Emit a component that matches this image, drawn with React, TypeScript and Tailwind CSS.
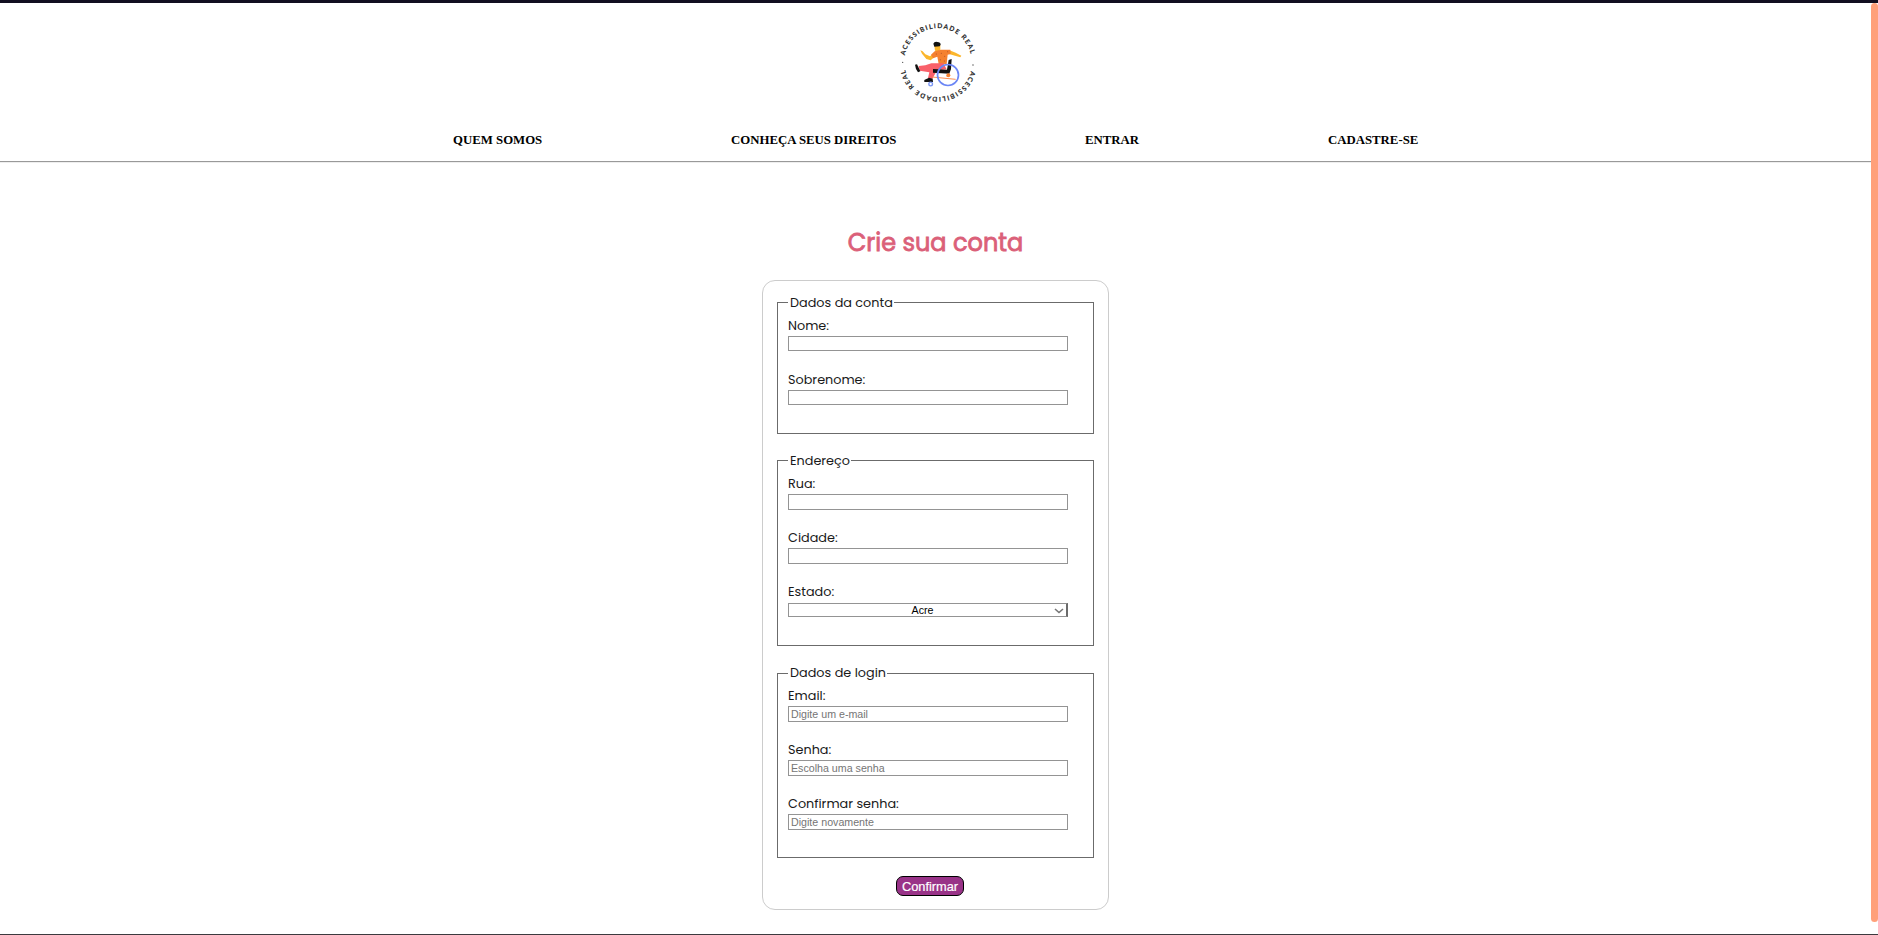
import React from "react";

function Logo() {
  return (
    <svg viewBox="48 60 252 252" className="h-[84px] w-[84px]" role="img">
      <defs>
        <path id="ring-top" d="M 74.6 166.5 A 101 101 0 0 1 274 172.5" />
        <path id="ring-low" d="M 272.8 213 A 101 101 0 0 1 74.8 206.5" />
      </defs>
      <g fill="#262626" stroke="#262626" strokeWidth="0.4" fontSize="19.5" fontWeight="700" fontFamily="Lato, sans-serif">
        <text>
          <textPath href="#ring-top" textLength="274">ACESSIBILIDADE REAL</textPath>
        </text>
        <text>
          <textPath href="#ring-low" textLength="274">ACESSIBILIDADE REAL</textPath>
        </text>
      </g>
      <circle cx="68" cy="187" r="2" fill="#444" />
      <circle cx="279" cy="195" r="2" fill="#444" />
      <path d="M121 151 L128 154 L136 163 L150 169 L163 158 L168 167 L152 181 L139 177 L126 161 Z" fill="#fbb62c" />
      <path d="M207 150 L227 158 L244 167 L241 172 L225 167 L207 162 Z" fill="#fbb62c" />
      <path d="M163 136 L181 136 L181 148 L176 155 L165 152 Z" fill="#fbb62c" />
      <path d="M160 131 Q163 124 172 126 Q182 127 182 134 L179 139 L163 140 Z" fill="#111" />
      <path d="M153 164 L164 154 L183 149 L211 149 L212 162 L203 164 L200 192 L176 192 L172 170 L159 175 Z" fill="#f5812f" />
      <g fill="#a84b27">
        <circle cx="169" cy="162" r="1.5" /><circle cx="184" cy="160" r="1.5" />
        <circle cx="194" cy="169" r="1.5" /><circle cx="181" cy="179" r="1.5" />
        <circle cx="193" cy="183" r="1.5" /><circle cx="203" cy="155" r="1.5" />
      </g>
      <path d="M116 198 L136 196 L154 190 L190 190 L200 208 L171 211 L157 237 L144 234 L148 217 L119 212 Z" fill="#f9606a" />
      <path d="M105 194 L111 193 L121 214 L114 217 L108 207 Z" fill="#111" />
      <path d="M147 233 L158 236 L159 246 L133 246 L133 240 Z" fill="#111" />
      <path d="M159 207 L201 209 L206 180 L215 177 L213 207 L208 221 L159 218 Z" fill="#111" />
      <path d="M157 231 L227 238 M204 225 L201 231" fill="none" stroke="#f98d52" strokeWidth="3" />
      <circle cx="205" cy="226" r="6" fill="#f5812f" />
      <circle cx="204" cy="225" r="31.5" fill="none" stroke="#6b86f5" strokeWidth="5" />
      <circle cx="152" cy="252" r="5.5" fill="#fff" stroke="#7b96f3" strokeWidth="4" />
    </svg>
  );
}

function Field({ label, box, placeholder }: { label: string; box: string; placeholder?: string }) {
  return (
    <div className="h-[54px]">
      <label className="block h-5 text-[12.8px] leading-[20px] whitespace-nowrap text-[#1a1a1a]">{label}</label>
      <input
        placeholder={placeholder}
        className={`block w-[280px] border border-[#949494] bg-white px-[2px] font-['Liberation_Sans',sans-serif] text-[10.667px] leading-[13px] placeholder:text-[#757575] ${box}`}
      />
    </div>
  );
}

function Group({ title, className, legend, children }: { title: string; className: string; legend: string; children: React.ReactNode }) {
  return (
    <fieldset className={`w-[317px] border border-[#6b6b6b] px-[10px] ${className}`}>
      <legend className={`h-[21px] pr-px pl-[2px] text-[12.8px] whitespace-nowrap text-[#1a1a1a] ${legend}`}>{title}</legend>
      {children}
    </fieldset>
  );
}

export default function App() {
  return (
    <div className="flex h-[935px] flex-col overflow-hidden border-b border-[#3c3a3e] bg-white font-['Poppins',sans-serif]">
      <div className="h-[3px] shrink-0 bg-[#120e20]" />
      <div className="flex min-h-0 flex-1">
        <div className="flex w-[1871px] flex-col items-center">
          <header className="flex h-[160px] w-full shrink-0 flex-col items-center border-b border-[#eeeeee]">
            <div className="flex h-[127px] w-full justify-center pt-[17px] pl-[5px]">
              <Logo />
            </div>
            <nav className="flex h-[31px] w-full gap-[189px] pl-[453px] font-['Liberation_Serif',serif] text-[12.8px] leading-[20px] font-bold whitespace-nowrap text-black">
              <a className="w-[89px]">QUEM SOMOS</a>
              <a className="w-[165px]">CONHEÇA SEUS DIREITOS</a>
              <a className="w-[54px]">ENTRAR</a>
              <a className="w-[90px]">CADASTRE-SE</a>
            </nav>
            <div className="h-px w-full bg-[#999999]" />
          </header>
          <h1 className="mt-[60px] h-[57px] text-[24px] leading-[40px] font-normal whitespace-nowrap text-[#db6079] [-webkit-text-stroke:0.8px_#db6079]">
            Crie sua conta
          </h1>
          <form className="flex h-[630px] w-[347px] shrink-0 flex-col rounded-[13px] border border-[#cccccc] pt-[11px] pl-[14px]">
            <Group title="Dados da conta" legend="leading-[21px]" className="h-[142px] shrink-0 pt-[3px]">
              <Field label="Nome:" box="h-[15px]" />
              <Field label="Sobrenome:" box="h-[15px]" />
            </Group>
            <Group title="Endereço" legend="leading-[21px]" className="mt-[16px] h-[196px] shrink-0 pt-[3px]">
              <Field label="Rua:" box="h-[16px]" />
              <Field label="Cidade:" box="h-[16px]" />
              <div className="h-[54px]">
                <label className="block h-5 text-[12.8px] leading-[20px] text-[#1a1a1a]">Estado:</label>
                <div className="mt-px flex h-[14px] w-[280px] items-center border border-r-2 border-[#949494] border-r-[#6b6b6b] pr-[2px] font-['Liberation_Sans',sans-serif] text-[10.667px] leading-[12px] text-black">
                  <span className="flex-1 pl-[2px] text-center">Acre</span>
                  <svg viewBox="0 0 10 6" className="mt-px h-[6px] w-[10px]">
                    <path d="M1 1l4 3.5L9 1" fill="none" stroke="#767676" strokeWidth="1.6" />
                  </svg>
                </div>
              </div>
            </Group>
            <Group title="Dados de login" legend="leading-[19px]" className="mt-[17px] h-[195px] shrink-0 pt-[2px]">
              <Field label="Email:" box="h-[16px]" placeholder="Digite um e-mail" />
              <Field label="Senha:" box="h-[16px]" placeholder="Escolha uma senha" />
              <Field label="Confirmar senha:" box="h-[16px]" placeholder="Digite novamente" />
            </Group>
            <button
              type="button"
              className="mt-[18px] ml-[119px] h-[20px] w-[68px] rounded-[7px] border border-black bg-[#993388] text-center font-['Liberation_Sans',sans-serif] text-[12.8px] leading-[19px] text-white [-webkit-text-stroke:0.2px_white]"
            >
              Confirmar
            </button>
          </form>
        </div>
        <div className="h-[919px] w-[7px] rounded-[4px] bg-[#ffa07a]" />
      </div>
    </div>
  );
}
